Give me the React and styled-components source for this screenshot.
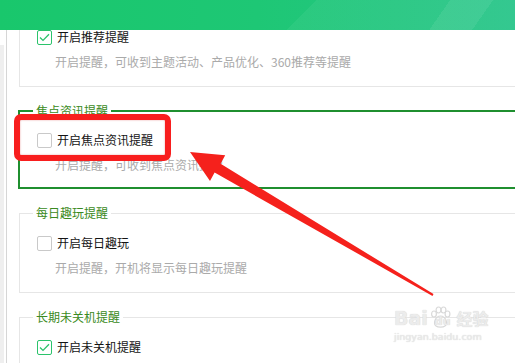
import React from "react";
import styled, { createGlobalStyle, css } from "styled-components";

const GlobalStyle = createGlobalStyle`
    body {
        margin: 0;
        background: #fff;
        font-family: "Noto Sans CJK SC", "Noto Sans", sans-serif;
    }
`;

const groups = [
    {
        title: "推荐提醒",
        label: "开启推荐提醒",
        desc: "开启提醒，可收到主题活动、产品优化、360推荐等提醒",
        checked: true,
    },
    {
        title: "焦点资讯提醒",
        label: "开启焦点资讯提醒",
        desc: "开启提醒，可收到焦点资讯提醒",
        checked: false,
        active: true,
    },
    {
        title: "每日趣玩提醒",
        label: "开启每日趣玩",
        desc: "开启提醒，开机将显示每日趣玩提醒",
        checked: false,
    },
    {
        title: "长期未关机提醒",
        label: "开启未关机提醒",
        desc: "开启提醒，长时间未关机时将提醒您",
        checked: true,
    },
];

function Check() {
    return (
        <svg width="11" height="9" viewBox="0 0 11 9">
            <path d="M1 4.6 L4 7.4 L10 1.2" fill="none" stroke="#2bc36b" strokeWidth="1.3" />
        </svg>
    );
}

function App() {
    return (
        <>
            <GlobalStyle />
            <Page>
                <Header />
                <Main>
                    <Rail>
                        <RailTab />
                    </Rail>
                    <Content>
                        <Stack>
                            {groups.map((g) => (
                                <Group key={g.title} $active={g.active}>
                                    <Legend>{g.title}</Legend>
                                    <Row>
                                        <Box $checked={g.checked}>{g.checked && <Check />}</Box>
                                        <Label>{g.label}</Label>
                                    </Row>
                                    <Desc>{g.desc}</Desc>
                                </Group>
                            ))}
                        </Stack>
                    </Content>
                </Main>

                {/* annotation drawn over the screenshot */}
                <Highlight />
                <Arrow viewBox="0 0 515 363" width="515" height="363">
                    <polygon
                        points="190,152 225.2,155.3 220.6,163.8 433.5,294.1 432.5,295.9 214.6,172.6 210,181.1"
                        fill="#f5211c"
                    />
                </Arrow>

                <Watermark>
                    <Brand>
                        Bai
                        <Paw viewBox="0 0 22 22" width="22" height="22">
                            <g fill="none" stroke="#d9d9d9" strokeWidth="1.2">
                                <ellipse cx="5" cy="8" rx="2.4" ry="3" />
                                <ellipse cx="9.5" cy="4" rx="2.4" ry="3" />
                                <ellipse cx="14.5" cy="4" rx="2.4" ry="3" />
                                <ellipse cx="18.5" cy="8" rx="2.4" ry="3" />
                                <path d="M11.5 10 C6 10 4 18 7 20 C9 21.5 14 21.5 16 20 C19 18 17 10 11.5 10 Z" />
                            </g>
                        </Paw>
                        <Du>du</Du>
                        <Cn>经验</Cn>
                    </Brand>
                    <Url>jingyan.baidu.com</Url>
                </Watermark>
            </Page>
        </>
    );
}

const Page = styled.div`
    position: relative;
    width: 515px;
    height: 363px;
    overflow: hidden;
    display: flex;
    flex-direction: column;
`;
const Header = styled.div`
    height: 30px;
    flex-shrink: 0;
    background:
        linear-gradient(125deg, transparent 84%, rgba(255, 255, 255, 0.07) 84%, rgba(255, 255, 255, 0.07) 92%, transparent 92%),
        linear-gradient(135deg, transparent 58%, rgba(255, 255, 255, 0.05) 58%),
        linear-gradient(90deg, #19c76c 0%, #1ec775 50%, #29c58a 100%);
`;
const Main = styled.div`
    flex: 1;
    display: flex;
    overflow: hidden;
`;
const Rail = styled.div`
    width: 6px;
    flex-shrink: 0;
    border-right: 1px solid #d6d6d6;
`;
const RailTab = styled.div`
    margin-top: 15px;
    width: 4px;
    height: 100%;
    background: #efefef;
`;
const Content = styled.div`
    flex: 1;
    padding-left: 12px;
    overflow: hidden;
`;
const Stack = styled.div`
    margin-top: -31px;
    display: flex;
    flex-direction: column;
    gap: 16px;
`;
const Group = styled.fieldset`
    margin: 0;
    min-width: 0;
    padding: 14px 0 16px 17px;
    border: 1px solid #e6e6e6;
    border-right: none;

    ${({ $active }) =>
        $active &&
        css`
            margin-left: -1px;
            padding: 13px 0 14px 17px;
            border: 2px solid #1f8f2f;
            border-right: none;
        `}
`;
const Legend = styled.legend`
    margin-left: -4px;
    padding: 0 3px;
    font-size: 12px;
    line-height: 16px;
    color: #3a8a22;
`;
const Row = styled.div`
    display: flex;
    align-items: center;
    gap: 5px;
    height: 16px;
`;
const Box = styled.span`
    box-sizing: border-box;
    width: 15px;
    height: 15px;
    border: 1px solid ${({ $checked }) => ($checked ? "#2bc36b" : "#c9c9c9")};
    border-radius: 2px;
    background: #fff;
    display: flex;
    align-items: center;
    justify-content: center;
`;
const Label = styled.span`
    font-size: 12px;
    line-height: 16px;
    color: #141414;
`;
const Desc = styled.div`
    margin-top: 9px;
    padding-left: 18px;
    font-size: 12px;
    line-height: 16px;
    color: #aaaaaa;
`;
const Highlight = styled.div`
    position: absolute;
    left: 14px;
    top: 114px;
    width: 157px;
    height: 47px;
    box-sizing: border-box;
    border: 6px solid #f81e1e;
    border-radius: 7px;
    box-shadow: inset 0 0 2px rgba(200, 0, 0, 0.4);
`;
const Arrow = styled.svg`
    position: absolute;
    left: 0;
    top: 0;
    pointer-events: none;
`;
const Watermark = styled.div`
    position: absolute;
    left: 394px;
    top: 306px;
    display: flex;
    flex-direction: column;
    align-items: flex-start;
    color: #ececec;
    text-shadow: 0 0 1px #c8c8c8;
    pointer-events: none;
`;
const Brand = styled.div`
    display: flex;
    align-items: flex-end;
    font-family: "DejaVu Sans", sans-serif;
    font-weight: bold;
    font-size: 19px;
    line-height: 22px;
`;
const Paw = styled.svg`
    margin-left: 1px;
    margin-bottom: 1px;
`;
const Du = styled.span`
    margin-left: -16px;
    font-size: 11px;
    line-height: 14px;
`;
const Cn = styled.span`
    margin-left: 6px;
    font-family: "Noto Sans CJK SC", sans-serif;
    font-size: 16px;
    line-height: 22px;
`;
const Url = styled.div`
    margin-top: 2px;
    font-family: "DejaVu Sans", sans-serif;
    font-size: 9.5px;
    line-height: 12px;
`;

export default App;
